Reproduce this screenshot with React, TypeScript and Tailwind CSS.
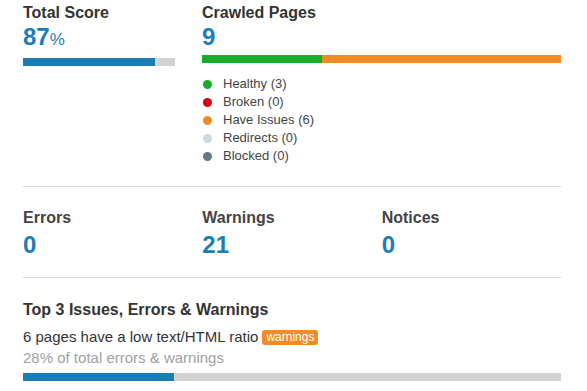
import React from "react";

const legend = [
  { label: "Healthy (3)", color: "bg-[#1aab2b]" },
  { label: "Broken (0)", color: "bg-[#d40015]" },
  { label: "Have Issues (6)", color: "bg-[#f28a26]" },
  { label: "Redirects (0)", color: "bg-[#cfd8dc]" },
  { label: "Blocked (0)", color: "bg-[#647a82]" },
];

const metrics = [
  { label: "Errors", value: "0" },
  { label: "Warnings", value: "21" },
  { label: "Notices", value: "0" },
];

export default function App() {
  return (
    <div
      className="w-[587px] h-[391px] bg-white pl-[23px] pr-[26px] pt-[3px] text-[#333]"
      style={{ fontFamily: '"Liberation Sans", Arial, sans-serif' }}
    >
      <div className="flex">
        <div className="w-[179px] shrink-0">
          <div className="text-[16px] leading-[19px] font-bold">Total Score</div>
          <div className="mt-[1px] text-[24px] leading-[27px] font-bold text-[#1a7db6]">
            87<span className="text-[17px] font-normal">%</span>
          </div>
          <div className="mt-[5px] flex h-[8px] w-[152px] bg-[#d2d2d2]">
            <div className="h-full w-[87%] bg-[#1a7db6]" />
          </div>
        </div>
        <div className="flex-1">
          <div className="text-[16px] leading-[19px] font-bold">Crawled Pages</div>
          <div className="mt-[1px] text-[24px] leading-[27px] font-bold text-[#1a7db6]">9</div>
          <div className="mt-[5px] flex h-[8px] w-full">
            <div className="h-full w-[33.3%] bg-[#1aab2b]" />
            <div className="h-full flex-1 bg-[#f28a26]" />
          </div>
          <ul className="mt-[12px]">
            {legend.map((l) => (
              <li key={l.label} className="flex items-center h-[18px] text-[13px] text-[#444]">
                <span className={`ml-[1px] w-[9px] h-[9px] rounded-full ${l.color}`} />
                <span className="ml-[11px]">{l.label}</span>
              </li>
            ))}
          </ul>
        </div>
      </div>

      <div className="mt-[21px] border-t border-[#dcdcdc]" />

      <div className="grid grid-cols-3 pt-[21px] pb-[19px]">
        {metrics.map((m) => (
          <div key={m.label}>
            <div className="text-[16px] leading-[19px] font-bold text-[#444]">{m.label}</div>
            <div className="mt-[4px] text-[24px] leading-[27px] font-bold text-[#1a7db6]">{m.value}</div>
          </div>
        ))}
      </div>

      <div className="border-t border-[#dcdcdc]" />

      <div className="pt-[22px]">
        <div className="text-[16px] leading-[19px] font-bold">Top 3 Issues, Errors &amp; Warnings</div>
        <div className="mt-[9px] flex items-center text-[15px] leading-[18px] text-[#333]">
          <span>6 pages have a low text/HTML ratio</span>
          <span className="ml-[4px] rounded-[3px] bg-[#f28a26] px-[4px] text-[12px] leading-[15px] text-white">
            warnings
          </span>
        </div>
        <div className="mt-[3px] text-[15px] leading-[18px] text-[#a0a0a0]">28% of total errors &amp; warnings</div>
        <div className="mt-[6px] flex h-[8px] w-full bg-[#d2d2d2]">
          <div className="h-full w-[28%] bg-[#1a7db6]" />
        </div>
      </div>
    </div>
  );
}
